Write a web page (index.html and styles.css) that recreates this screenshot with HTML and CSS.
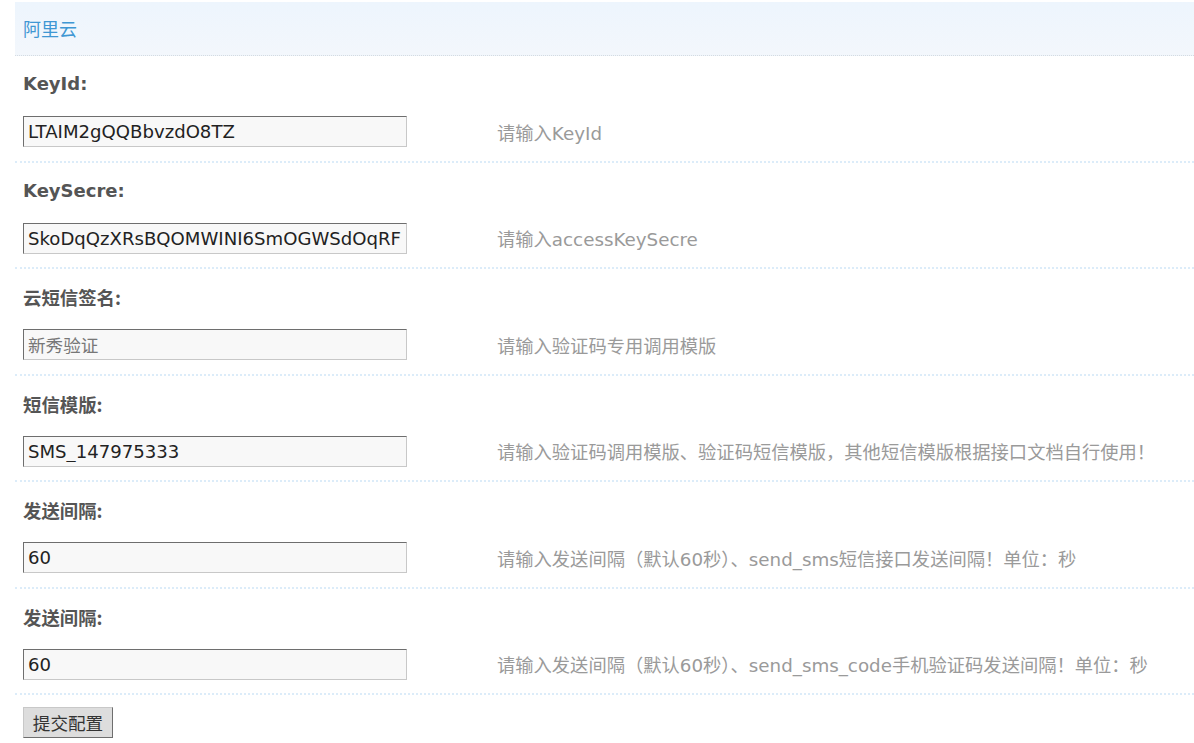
FILE: index.html
```html
<!DOCTYPE html>
<html lang="zh-CN">
<head>
<meta charset="utf-8">
<title>阿里云</title>
<link rel="stylesheet" href="styles.css">
</head>
<body>
<form class="panel">
  <div class="panel-head">阿里云</div>

  <div class="item">
    <div class="item-label latin">KeyId:</div>
    <div class="item-row">
      <div class="item-input"><input class="txt" type="text" value="LTAIM2gQQBbvzdO8TZ"></div>
      <div class="item-tip">请输入KeyId</div>
    </div>
  </div>

  <div class="item">
    <div class="item-label latin">KeySecre:</div>
    <div class="item-row">
      <div class="item-input"><input class="txt" type="text" value="SkoDqQzXRsBQOMWINI6SmOGWSdOqRF"></div>
      <div class="item-tip">请输入accessKeySecre</div>
    </div>
  </div>

  <div class="item">
    <div class="item-label">云短信签名:</div>
    <div class="item-row">
      <div class="item-input"><input class="txt txt-cn" type="text" value="新秀验证"></div>
      <div class="item-tip">请输入验证码专用调用模版</div>
    </div>
  </div>

  <div class="item">
    <div class="item-label">短信模版:</div>
    <div class="item-row">
      <div class="item-input"><input class="txt" type="text" value="SMS_147975333"></div>
      <div class="item-tip">请输入验证码调用模版、验证码短信模版，其他短信模版根据接口文档自行使用！</div>
    </div>
  </div>

  <div class="item">
    <div class="item-label">发送间隔:</div>
    <div class="item-row">
      <div class="item-input"><input class="txt" type="text" value="60"></div>
      <div class="item-tip">请输入发送间隔（默认60秒）、send_sms短信接口发送间隔！单位：秒</div>
    </div>
  </div>

  <div class="item">
    <div class="item-label">发送间隔:</div>
    <div class="item-row">
      <div class="item-input"><input class="txt" type="text" value="60"></div>
      <div class="item-tip">请输入发送间隔（默认60秒）、send_sms_code手机验证码发送间隔！单位：秒</div>
    </div>
  </div>

  <div class="actions">
    <button class="btn" type="button">提交配置</button>
  </div>
</form>
</body>
</html>
```

FILE: styles.css
```css
html, body {
  margin: 0;
  padding: 0;
  background: #ffffff;
}

body {
  font-family: "DejaVu Sans", "Noto Sans CJK SC", sans-serif;
  font-size: 17.6px;
  color: #333;
  overflow: hidden;
}

.panel {
  margin: 2px 0 0 15px;
}

.panel-head {
  height: 53px;
  line-height: 53px;
  padding-left: 8px;
  background: linear-gradient(#edf5fd, #f3f7fc);
  border-bottom: 1px dotted #d6dbe0;
  color: #3f97d3;
  font-family: "Noto Sans CJK SC", sans-serif;
  font-size: 18px;
}

.item {
  border-bottom: 2px dotted #dcecf9;
  padding-bottom: 13.5px;
}

.item-label {
  padding: 17px 0 0 8px;
  line-height: 22px;
  font-weight: bold;
  color: #555;
  font-family: "Noto Sans CJK SC", sans-serif;
  font-size: 18.4px;
}

.item-label.latin {
  font-family: "DejaVu Sans", "Noto Sans CJK SC", sans-serif;
  font-size: 18px;
}

.item-row {
  display: grid;
  grid-template-columns: 475px 1fr;
  align-items: center;
  margin-top: 21px;
}

.item-input {
  padding-left: 8px;
}

.txt {
  box-sizing: border-box;
  display: block;
  width: 384px;
  height: 31px;
  margin: 0;
  padding: 0 4px;
  background: #f8f8f8;
  border: 1px solid;
  border-color: #6e6e6e #c8c8c8 #c8c8c8 #6e6e6e;
  font-family: "DejaVu Sans", "Noto Sans CJK SC", sans-serif;
  font-size: 18.1px;
  color: #222;
  outline: none;
}

.txt-cn {
  color: #777;
  font-family: "Noto Sans CJK SC", sans-serif;
  font-size: 17.6px;
}

.item-tip {
  padding-left: 7px;
  color: #9a9a9a;
  font-size: 18.3px;
  white-space: nowrap;
}

.actions {
  padding: 12px 0 0 8px;
}

.btn {
  box-sizing: border-box;
  width: 90px;
  height: 31px;
  padding: 0;
  background: #dddddd;
  border: 1px solid;
  border-color: #c8c8c8 #6e6e6e #6e6e6e #c8c8c8;
  font-family: "Noto Sans CJK SC", sans-serif;
  font-size: 17.6px;
  color: #333;
}
```
